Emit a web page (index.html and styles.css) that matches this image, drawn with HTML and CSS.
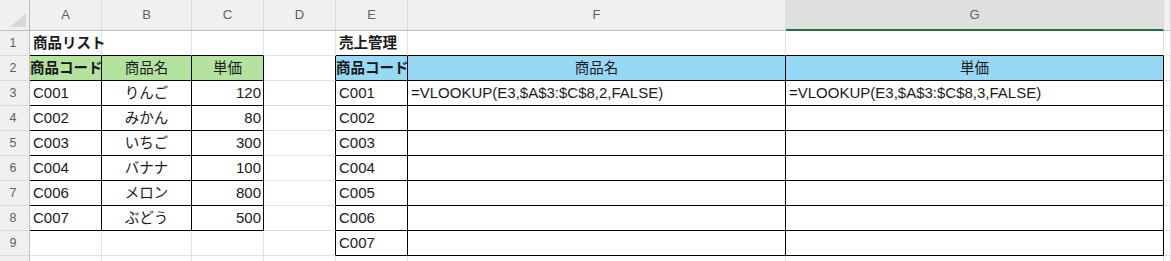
FILE: index.html
```html
<!DOCTYPE html>
<html lang="ja">
<head>
  <meta charset="UTF-8">
  <meta name="viewport" content="width=device-width, initial-scale=1.0">
  <title>商品リスト / 売上管理</title>
  <link rel="stylesheet" href="styles.css">
</head>
<body>
  <div class="sheet">
    <!-- column headers -->
    <div class="cell hd corner">
      <svg width="16" height="14" viewBox="0 0 16 14"><polygon points="16,0 16,14 0,14" fill="#d9d9d9"/></svg>
    </div>
    <div class="cell hd">A</div>
    <div class="cell hd">B</div>
    <div class="cell hd">C</div>
    <div class="cell hd">D</div>
    <div class="cell hd">E</div>
    <div class="cell hd">F</div>
    <div class="cell hd sel">G</div>
    <div class="cell hd"></div>

    <!-- row 1 -->
    <div class="cell rh">1</div>
    <div class="cell bb bold jp">商品リスト</div>
    <div class="cell bb"></div>
    <div class="cell bb"></div>
    <div class="cell"></div>
    <div class="cell bb bold jp">売上管理</div>
    <div class="cell bb"></div>
    <div class="cell bb"></div>
    <div class="cell"></div>

    <!-- row 2: table headings -->
    <div class="cell rh">2</div>
    <div class="cell bb br green center clip bold jp">商品コード</div>
    <div class="cell bb br green center jp">商品名</div>
    <div class="cell bb br green center jp">単価</div>
    <div class="cell br"></div>
    <div class="cell bb br blue center clip bold jp">商品コード</div>
    <div class="cell bb br blue center jp">商品名</div>
    <div class="cell bb br blue center jp">単価</div>
    <div class="cell"></div>

    <!-- row 3 -->
    <div class="cell rh">3</div>
    <div class="cell bb br">C001</div>
    <div class="cell bb br center jp">りんご</div>
    <div class="cell bb br num">120</div>
    <div class="cell br"></div>
    <div class="cell bb br">C001</div>
    <div class="cell bb br">=VLOOKUP(E3,$A$3:$C$8,2,FALSE)</div>
    <div class="cell bb br">=VLOOKUP(E3,$A$3:$C$8,3,FALSE)</div>
    <div class="cell"></div>

    <!-- row 4 -->
    <div class="cell rh">4</div>
    <div class="cell bb br">C002</div>
    <div class="cell bb br center jp">みかん</div>
    <div class="cell bb br num">80</div>
    <div class="cell br"></div>
    <div class="cell bb br">C002</div>
    <div class="cell bb br"></div>
    <div class="cell bb br"></div>
    <div class="cell"></div>

    <!-- row 5 -->
    <div class="cell rh">5</div>
    <div class="cell bb br">C003</div>
    <div class="cell bb br center jp">いちご</div>
    <div class="cell bb br num">300</div>
    <div class="cell br"></div>
    <div class="cell bb br">C003</div>
    <div class="cell bb br"></div>
    <div class="cell bb br"></div>
    <div class="cell"></div>

    <!-- row 6 -->
    <div class="cell rh">6</div>
    <div class="cell bb br">C004</div>
    <div class="cell bb br center jp">バナナ</div>
    <div class="cell bb br num">100</div>
    <div class="cell br"></div>
    <div class="cell bb br">C004</div>
    <div class="cell bb br"></div>
    <div class="cell bb br"></div>
    <div class="cell"></div>

    <!-- row 7 -->
    <div class="cell rh">7</div>
    <div class="cell bb br">C006</div>
    <div class="cell bb br center jp">メロン</div>
    <div class="cell bb br num">800</div>
    <div class="cell br"></div>
    <div class="cell bb br">C005</div>
    <div class="cell bb br"></div>
    <div class="cell bb br"></div>
    <div class="cell"></div>

    <!-- row 8 -->
    <div class="cell rh">8</div>
    <div class="cell bb br">C007</div>
    <div class="cell bb br center jp">ぶどう</div>
    <div class="cell bb br num">500</div>
    <div class="cell br"></div>
    <div class="cell bb br">C006</div>
    <div class="cell bb br"></div>
    <div class="cell bb br"></div>
    <div class="cell"></div>

    <!-- row 9 -->
    <div class="cell rh">9</div>
    <div class="cell"></div>
    <div class="cell"></div>
    <div class="cell"></div>
    <div class="cell br"></div>
    <div class="cell bb br">C007</div>
    <div class="cell bb br"></div>
    <div class="cell bb br"></div>
    <div class="cell"></div>

    <!-- row 10 (only its top edge shows) -->
    <div class="cell rh"></div>
    <div class="cell"></div>
    <div class="cell"></div>
    <div class="cell"></div>
    <div class="cell"></div>
    <div class="cell"></div>
    <div class="cell"></div>
    <div class="cell"></div>
    <div class="cell"></div>
  </div>
</body>
</html>
```

FILE: styles.css
```css
body {
  margin: 0;
  font-family: "Liberation Sans", "Noto Sans CJK JP", sans-serif;
  font-size: 15px;
  color: #1a1a1a;
  background: #fff;
  overflow: hidden;
}
.sheet {
  display: grid;
  grid-template-columns: 30px 72px 90px 72px 72px 72px 378px 378px 1fr;
  grid-template-rows: 31px repeat(10, 25px);
}
.cell {
  box-sizing: border-box;
  min-width: 0;
  padding: 0 3px;
  line-height: 24px;
  white-space: nowrap;
  border-right: 1px solid #e1e1e1;
  border-bottom: 1px solid #e1e1e1;
}
/* column and row headers */
.hd {
  background: #f0f0f0;
  color: #5f5f5f;
  font-size: 13px;
  line-height: 30px;
  text-align: center;
  border-right-color: #dadada;
  border-bottom-color: #bdbdbd;
}
.hd.sel {
  background: #dfdfdf;
  line-height: 29px;
  border-bottom: 2px solid #217346;
}
.corner {
  display: flex;
  justify-content: flex-end;
  align-items: flex-end;
  padding: 0 3px 3px 0;
  border-right-color: #bdbdbd;
}
.corner svg {
  display: block;
}
.rh {
  background: #f0f0f0;
  color: #5f5f5f;
  font-size: 12.5px;
  text-align: center;
  padding: 0 3px 0 0;
  border-right-color: #bdbdbd;
  border-bottom-color: #dadada;
}
/* table borders and fills */
.bb {
  border-bottom-color: #000;
}
.br {
  border-right-color: #000;
}
.green {
  background: #b4e3a0;
}
.blue {
  background: #97d9f5;
}
.jp {
  font-size: 14.5px;
}
.bold {
  font-weight: bold;
}
.center {
  text-align: center;
}
.num {
  text-align: right;
  padding-right: 2px;
}
.clip {
  overflow: hidden;
  padding: 0;
}
```
